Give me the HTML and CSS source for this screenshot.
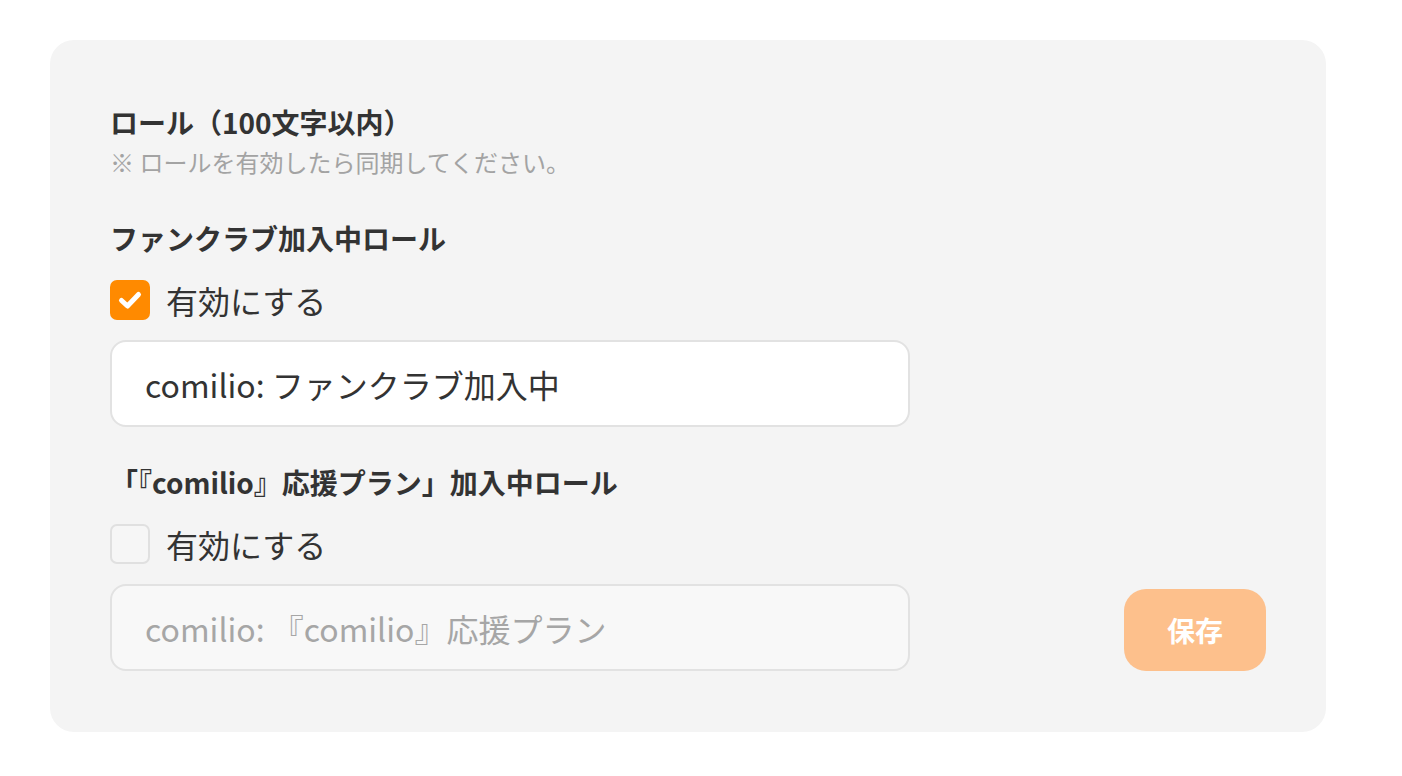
FILE: index.html
```html
<!DOCTYPE html>
<html lang="ja">
<head>
<meta charset="utf-8">
<link rel="stylesheet" href="styles.css">
</head>
<body>
<div class="card">
  <h2 class="title">ロール（100文字以内）</h2>
  <p class="note">※ ロールを有効したら同期してください。</p>

  <div class="group first">
    <h3 class="label">ファンクラブ加入中ロール</h3>
    <label class="check-row">
      <span class="box checked">
        <svg viewBox="0 0 40 40" width="40" height="40"><path d="M11.5 20.5 L17.5 26 L28.5 14.5" fill="none" stroke="#fff" stroke-width="5" stroke-linecap="round" stroke-linejoin="round"/></svg>
      </span>
      <span class="check-text">有効にする</span>
    </label>
    <div class="input">comilio: ファンクラブ加入中</div>
  </div>

  <div class="group second">
    <h3 class="label">「『comilio』応援プラン」加入中ロール</h3>
    <label class="check-row">
      <span class="box"></span>
      <span class="check-text">有効にする</span>
    </label>
    <div class="bottom-row">
      <div class="input disabled">comilio: 『comilio』応援プラン</div>
      <button class="save">保存</button>
    </div>
  </div>
</div>
</body>
</html>
```

FILE: styles.css
```css
html, body {
  margin: 0;
  padding: 0;
  background: #ffffff;
}

body {
  font-family: "Noto Sans CJK JP", "Noto Sans", sans-serif;
  color: #333333;
}

.card {
  margin: 40px 0 0 50px;
  width: 1276px;
  height: 692px;
  box-sizing: border-box;
  padding: 60px 60px 60px 60px;
  background: #f4f4f4;
  border-radius: 24px;
  display: flex;
  flex-direction: column;
}

.title {
  margin: 0;
  font-size: 28px;
  line-height: 44px;
  font-weight: 700;
  color: #333333;
}

.note {
  margin: 0;
  font-size: 24px;
  line-height: 36px;
  color: #a3a3a3;
}

.group {
  display: flex;
  flex-direction: column;
}

.group.first {
  margin-top: 36px;
}

.group.second {
  margin-top: 33px;
}

.label {
  margin: 0;
  font-size: 28px;
  line-height: 44px;
  font-weight: 700;
  color: #333333;
}

.check-row {
  margin-top: 20px;
  display: flex;
  align-items: center;
  gap: 16px;
  height: 40px;
}

.box {
  width: 40px;
  height: 40px;
  box-sizing: border-box;
  border-radius: 7px;
  border: 2px solid #e0e0e0;
  background: #f6f6f6;
  display: flex;
  flex-shrink: 0;
}

.box.checked {
  background: #ff8a00;
  border: none;
}

.check-text {
  font-size: 32px;
  line-height: 40px;
  color: #333333;
}

.input {
  margin-top: 20px;
  width: 800px;
  height: 87px;
  box-sizing: border-box;
  border: 2px solid #e2e2e2;
  border-radius: 16px;
  background: #ffffff;
  padding: 0 33px;
  display: flex;
  align-items: center;
  font-size: 32px;
  color: #333333;
}

.input.disabled {
  margin-top: 0;
  background: #f8f8f8;
  color: #a6a6a6;
}

.bottom-row {
  margin-top: 20px;
  display: flex;
  align-items: flex-end;
  justify-content: space-between;
}

.save {
  width: 142px;
  height: 82px;
  border: none;
  border-radius: 22px;
  background: #fdc08c;
  color: #ffffff;
  font-family: "Noto Sans CJK JP", "Noto Sans", sans-serif;
  font-size: 28px;
  font-weight: 700;
  padding: 0;
}
```
